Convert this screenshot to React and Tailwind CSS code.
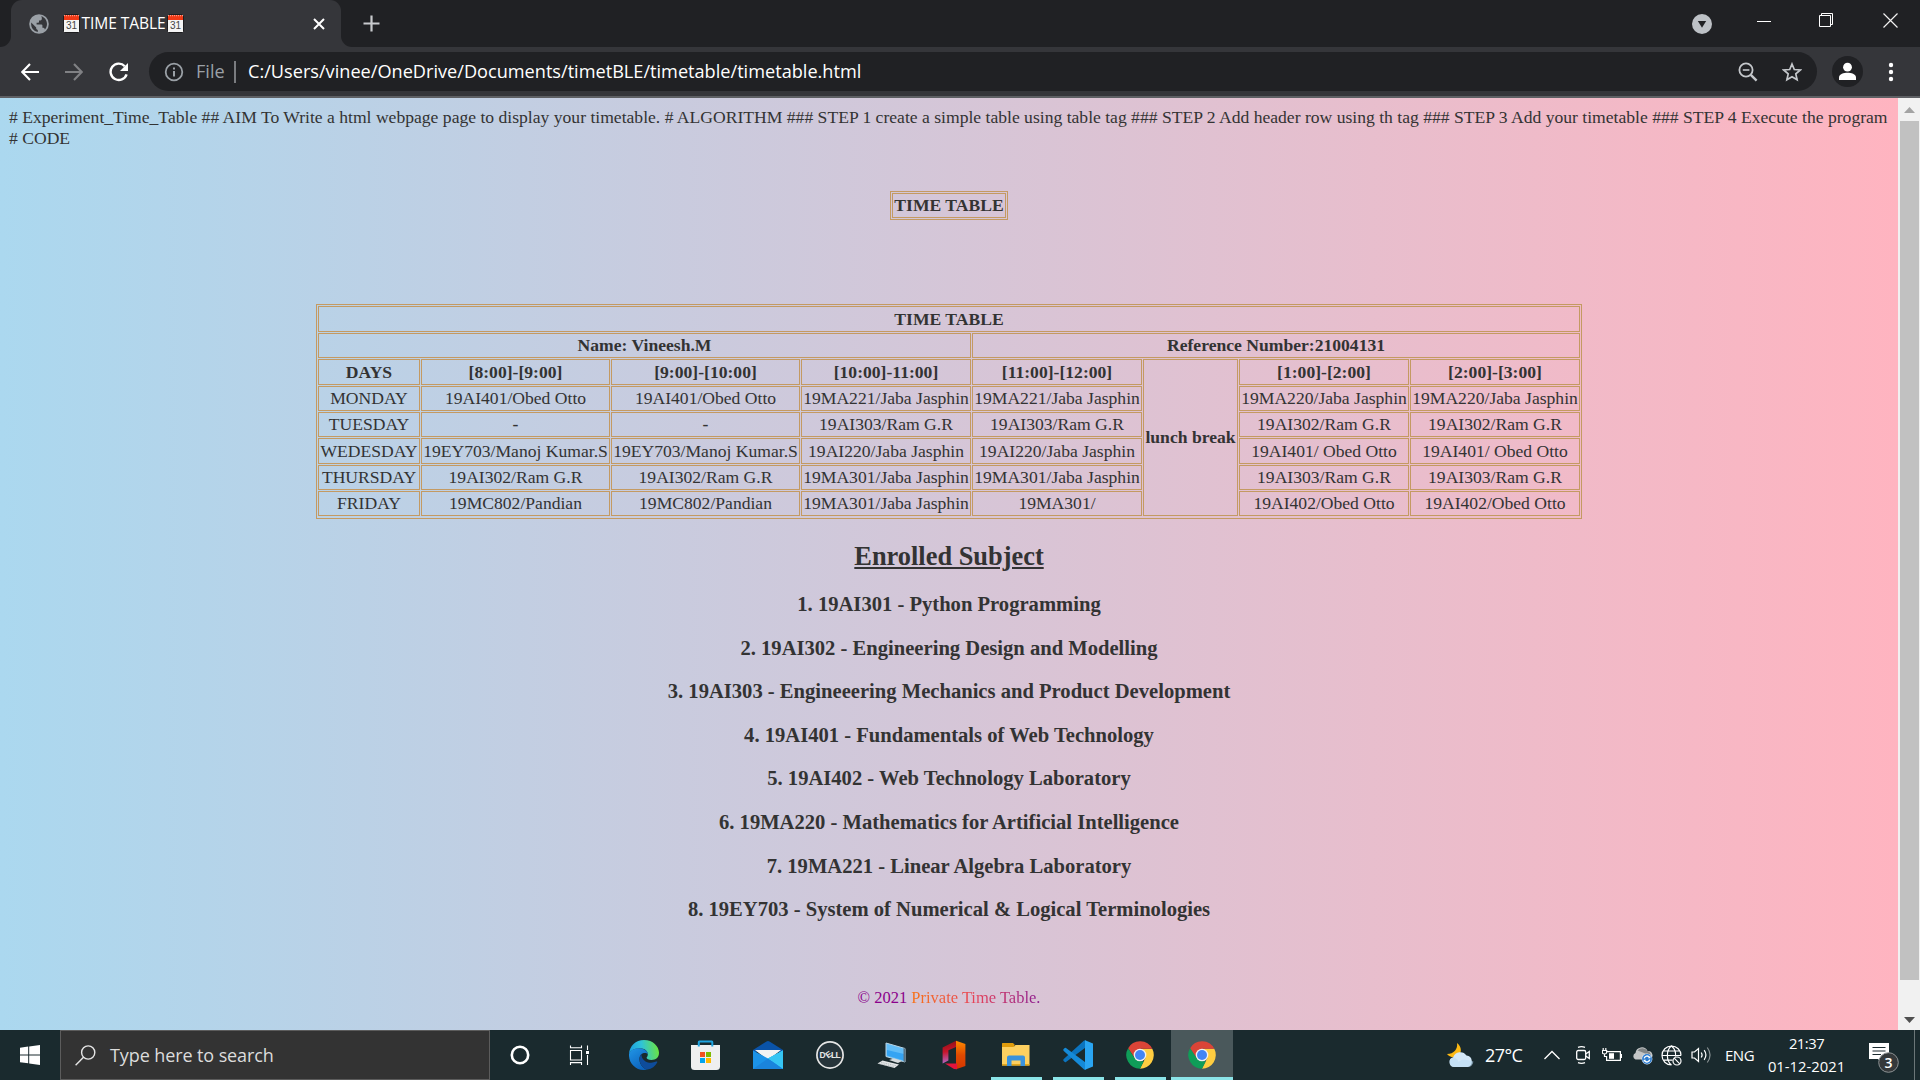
import React from "react";

const UI = "font-['Open_Sans','Noto_Sans',sans-serif]";

/* ---------- browser icons ---------- */

function Globe() {
  return (
    <svg width="20" height="20" viewBox="0 0 20 20">
      <circle cx="10" cy="10" r="9.8" fill="#9aa0a6" />
      <path
        d="M2.2 8.6 L7.2 13.4 V14.6 Q7.2 15.6 8.8 15.9 V18 C4.8 17.4 1.6 14 2.2 8.6Z M12.2 2.3 C15.2 3 18 6 18 10 C18 12.4 17 14.4 15.9 15.4 C15.5 14.2 14.8 13.8 13.4 13.8 V11.4 Q13.4 10.6 12.4 10.6 H7.6 V8.8 H9.2 Q10 8.8 10 8 V6.4 H11.4 Q12.8 6.4 12.8 5 V3.6Z"
        fill="#35363a"
      />
    </svg>
  );
}

function Calendar() {
  return (
    <svg width="17" height="19" viewBox="0 0 17 19" className="shrink-0">
      <rect x="0.5" y="0.5" width="16" height="18" rx="1" fill="#f4f4f4" stroke="#1d1d1f" />
      <rect x="1" y="1" width="15" height="5" fill="#f03a17" />
      <path d="M1 1.7H16" stroke="#ffb3a3" strokeDasharray="1 1" strokeWidth="1" />
      <text x="8.5" y="15" textAnchor="middle" fontSize="10" fontFamily="Liberation Sans, sans-serif" fill="#444">31</text>
    </svg>
  );
}

function TabBar() {
  return (
    <div className="flex h-[47px] bg-[#202124]">
      <div className="flex w-[11px] items-end bg-[#35363a]">
        <div className="h-[47px] w-[11px] rounded-br-[11px] bg-[#202124]" />
      </div>
      <div className="flex bg-[#202124]">
        <div className="flex h-[47px] w-[330px] items-center rounded-t-[11px] bg-[#35363a] pl-[18px]">
          <Globe />
          <div className="ml-[14px] flex w-[121px] items-center justify-between">
            <Calendar />
            <span className="text-[15.6px] leading-none tracking-[-0.1px] whitespace-nowrap text-white">TIME TABLE</span>
            <Calendar />
          </div>
          <svg width="12" height="12" viewBox="0 0 12 12" className="ml-[129px]">
            <path d="M1 1 11 11M11 1 1 11" stroke="#fff" strokeWidth="2" />
          </svg>
        </div>
      </div>
      <div className="w-[11px] bg-[#35363a]">
        <div className="h-[47px] w-[11px] rounded-bl-[11px] bg-[#202124]" />
      </div>
      <div className="flex flex-1 items-center">
        <svg width="17" height="17" viewBox="0 0 17 17" className="ml-[11px]">
          <path d="M8.5 0.5V16.5M0.5 8.5H16.5" stroke="#c8cacd" strokeWidth="2.2" />
        </svg>
        <svg width="20" height="20" viewBox="0 0 20 20" className="ml-auto">
          <circle cx="10" cy="10" r="10" fill="#bdc1c6" />
          <path d="M5.8 7H14.2L10 13.8Z" fill="#202124" />
        </svg>
        <svg width="14" height="15" viewBox="0 0 14 15" className="mb-[7px] ml-[45px]">
          <path d="M0 8.5H14" stroke="#fff" />
        </svg>
        <svg width="15" height="15" viewBox="0 0 15 15" className="mb-[7px] ml-[48px]">
          <path d="M0.5 2.5H11.5V13.5H0.5ZM2.5 2V0.5H13.5V11.5H12" fill="none" stroke="#fff" />
        </svg>
        <svg width="15" height="15" viewBox="0 0 15 15" className="mr-[22px] mb-[7px] ml-[49px]">
          <path d="M0.5 0.5 14.5 14.5M14.5 0.5 0.5 14.5" stroke="#f1f1f1" strokeWidth="1.2" />
        </svg>
      </div>
    </div>
  );
}

function Toolbar() {
  return (
    <div className="flex h-[51px] items-center border-b-2 border-[#5e6064] bg-[#35363a] text-white">
      <svg width="18" height="18" viewBox="0 0 18 18" className="ml-[21px]">
        <path d="M18 9H1.5M9 1 1.3 9 9 17" fill="none" stroke="#fff" strokeWidth="2.1" />
      </svg>
      <svg width="18" height="18" viewBox="0 0 18 18" className="ml-[26px]">
        <path d="M0 9H16.5M9 1 16.7 9 9 17" fill="none" stroke="#808184" strokeWidth="2.1" />
      </svg>
      <svg width="20" height="20" viewBox="0 0 20 20" className="ml-[26px]">
        <path d="M15.8 4.2A8.2 8.2 0 1 0 17.6 12.4" fill="none" stroke="#fff" strokeWidth="2.4" />
        <path d="M19 1V9H11Z" fill="#fff" />
      </svg>
      <div className="ml-[20px] flex h-[39px] w-[1668px] items-center rounded-full bg-[#202124]">
        <svg width="20" height="20" viewBox="0 0 20 20" className="ml-[15px]">
          <circle cx="10" cy="10" r="8.3" fill="none" stroke="#9aa0a6" strokeWidth="1.8" />
          <path d="M10 9V14.6M10 5.4V7.4" stroke="#9aa0a6" strokeWidth="2" />
        </svg>
        <span className="ml-[12px] w-[38px] text-[18.1px] leading-none whitespace-nowrap text-[#9aa0a6]">File</span>
        <div className="h-[22px] w-[2px] bg-[#7a7c80]" />
        <span className="ml-[12px] text-[18.15px] leading-none whitespace-nowrap">
          C:/Users/vinee/OneDrive/Documents/timetBLE/timetable/timetable.html
        </span>
        <svg width="20" height="20" viewBox="0 0 20 20" className="ml-auto" fill="none" stroke="#c4c7cb" strokeWidth="1.8">
          <circle cx="8" cy="8" r="6.6" />
          <path d="M12.8 12.8 18.6 18.6" strokeWidth="2.4" />
          <path d="M4.8 8H11.4" strokeWidth="1.6" />
        </svg>
        <svg width="20" height="20" viewBox="0 0 20 20" className="mr-[15px] ml-[24px]">
          <path d="M10 2 12.3 7.5 18.3 8 13.8 11.9 15.1 17.8 10 14.7 4.9 17.8 6.2 11.9 1.7 8 7.7 7.5Z" fill="none" stroke="#c4c7cb" strokeWidth="1.7" />
        </svg>
      </div>
      <svg width="31" height="31" viewBox="0 0 31 31" className="ml-[15px]">
        <circle cx="15.5" cy="15.5" r="15.5" fill="#202124" />
        <circle cx="15.5" cy="11.2" r="4.4" fill="#fff" />
        <path d="M7 24V21.5C7 18 12 16.8 15.5 16.8S24 18 24 21.5V24Z" fill="#fff" />
      </svg>
      <svg width="6" height="20" viewBox="0 0 6 20" className="ml-[25px]" fill="#fff">
        <circle cx="3" cy="3" r="2.2" />
        <circle cx="3" cy="10" r="2.2" />
        <circle cx="3" cy="17" r="2.2" />
      </svg>
    </div>
  );
}

/* ---------- page ---------- */

const DAYS = [
  ["MONDAY", "19AI401/Obed Otto", "19AI401/Obed Otto", "19MA221/Jaba Jasphin", "19MA221/Jaba Jasphin", "19MA220/Jaba Jasphin", "19MA220/Jaba Jasphin"],
  ["TUESDAY", "-", "-", "19AI303/Ram G.R", "19AI303/Ram G.R", "19AI302/Ram G.R", "19AI302/Ram G.R"],
  ["WEDESDAY", "19EY703/Manoj Kumar.S", "19EY703/Manoj Kumar.S", "19AI220/Jaba Jasphin", "19AI220/Jaba Jasphin", "19AI401/ Obed Otto", "19AI401/ Obed Otto"],
  ["THURSDAY", "19AI302/Ram G.R", "19AI302/Ram G.R", "19MA301/Jaba Jasphin", "19MA301/Jaba Jasphin", "19AI303/Ram G.R", "19AI303/Ram G.R"],
  ["FRIDAY", "19MC802/Pandian", "19MC802/Pandian", "19MA301/Jaba Jasphin", "19MA301/", "19AI402/Obed Otto", "19AI402/Obed Otto"],
];

const SUBJECTS = [
  "1. 19AI301 - Python Programming",
  "2. 19AI302 - Engineering Design and Modelling",
  "3. 19AI303 - Engineeering Mechanics and Product Development",
  "4. 19AI401 - Fundamentals of Web Technology",
  "5. 19AI402 - Web Technology Laboratory",
  "6. 19MA220 - Mathematics for Artificial Intelligence",
  "7. 19MA221 - Linear Algebra Laboratory",
  "8. 19EY703 - System of Numerical & Logical Terminologies",
];

function Cell({ children, className = "" }) {
  return (
    <div className={`flex items-center justify-center border border-[#c49a62] leading-[21px] whitespace-nowrap ${className}`}>
      {children}
    </div>
  );
}

function Timetable() {
  return (
    <div className="mx-auto mt-[84px] grid w-[1266px] grid-cols-[102px_189px_189px_170px_170px_95px_170px_170px] grid-rows-[26px_25px_26px_25px_25px_26px_25px_25px] gap-px border border-[#c49a62] px-px pt-px pb-[2px]">
      <Cell className="col-span-8 font-bold">TIME TABLE</Cell>
      <Cell className="col-span-4 font-bold">Name: Vineesh.M</Cell>
      <Cell className="col-span-4 font-bold">Reference Number:21004131</Cell>
      <Cell className="font-bold">DAYS</Cell>
      <Cell className="font-bold">[8:00]-[9:00]</Cell>
      <Cell className="font-bold">[9:00]-[10:00]</Cell>
      <Cell className="font-bold">[10:00]-11:00]</Cell>
      <Cell className="font-bold">[11:00]-[12:00]</Cell>
      <Cell className="row-span-6 font-bold">lunch break</Cell>
      <Cell className="font-bold">[1:00]-[2:00]</Cell>
      <Cell className="font-bold">[2:00]-[3:00]</Cell>
      {DAYS.map((row) =>
        row.map((text, i) => (
          <Cell key={row[0] + i} className={text === "-" ? "font-bold" : ""}>
            {text}
          </Cell>
        ))
      )}
    </div>
  );
}

function Page() {
  return (
    <div className="flex h-[932px]">
      <div className="flex w-[1898px] flex-col bg-linear-to-r/srgb from-[#abd8ef] to-[#ffb4c0] px-[9px] pt-[9px] font-['Liberation_Serif',serif] text-[17.6px] leading-[21px] text-[#333]">
        <div className="whitespace-nowrap">
          # Experiment_Time_Table ## AIM To Write a html webpage page to display your timetable. # ALGORITHM ### STEP 1 create a simple table using table tag ### STEP 2 Add header row using th tag ### STEP 3 Add your timetable ### STEP 4 Execute the program
          <br />
          # CODE
        </div>
        <div className="mx-auto mt-[42px] h-[29px] w-[118px] border border-[#c49a62] p-px">
          <Cell className="h-[25px] font-bold">TIME TABLE</Cell>
        </div>
        <Timetable />
        <h2 className="mt-[22px] text-center text-[26.4px] leading-[31px] font-bold underline">Enrolled Subject</h2>
        <div className="mt-[20px] flex flex-col gap-[19.6px] text-center text-[20.6px] leading-[24px] font-bold">
          {SUBJECTS.map((s) => (
            <h3 key={s}>{s}</h3>
          ))}
        </div>
        <footer className="mt-[67px] text-center text-[16.5px] leading-[20px] text-[#8b008b]">
          © 2021{" "}
          <span className="bg-linear-to-r/srgb from-[#f97316] via-[#e6435a] to-[#8b1a8f] bg-clip-text text-transparent">
            Private Time Table.
          </span>
        </footer>
      </div>
      <div className="flex w-[22px] flex-col items-center bg-[#f1f1f1]">
        <svg width="22" height="23" viewBox="0 0 22 23">
          <path d="M6 15H17L11.5 9Z" fill="#a3a3a3" />
        </svg>
        <div className="ml-px h-[859px] w-[19px] bg-[#c1c1c1]" />
        <svg width="22" height="50" viewBox="0 0 22 50">
          <path d="M6 37H17L11.5 43Z" fill="#505050" />
        </svg>
      </div>
    </div>
  );
}

/* ---------- taskbar icons ---------- */

function Edge() {
  return (
    <svg width="30" height="30" viewBox="0 0 30 30">
      <defs>
        <linearGradient id="edgeTop" x1="0" y1="0.6" x2="1" y2="0.5">
          <stop offset="0" stopColor="#1b9de2" />
          <stop offset="0.45" stopColor="#2fc3d8" />
          <stop offset="1" stopColor="#6be43f" />
        </linearGradient>
        <linearGradient id="edgeLow" x1="0" y1="0" x2="0.6" y2="1">
          <stop offset="0" stopColor="#2196e6" />
          <stop offset="1" stopColor="#0c63bd" />
        </linearGradient>
      </defs>
      <path d="M0 14C0.6 6 6.6 0 15 0 24 0 30 6.4 30 12.8 30 17.6 26.6 20 22.6 20 19.4 20 17.6 19 17.6 17.8 17.6 16.8 18.8 16.6 18.8 14.4 18.8 11 15.6 8.2 10.8 8.2 5 8.2 1 11 0 14Z" fill="url(#edgeTop)" />
      <path d="M0 14C1 10.5 5 8.2 10 8.2 14.6 8.2 18.6 10.6 18.8 14.2 17.4 12 10.6 12.2 10.4 19 10.2 25 15.6 29.6 18.6 29.5 7.8 32 -0.6 23.6 0 14Z" fill="url(#edgeLow)" />
      <path d="M12.4 13.4C8.6 18.8 11 27.6 18.4 29.6 22.8 28.8 26.4 26.2 28.2 22.4 28.5 21.6 28 21.2 27.2 21.6 20.2 24.8 12 21 12.4 13.4Z" fill="#0e4c9b" />
    </svg>
  );
}

function Store() {
  return (
    <svg width="30" height="30" viewBox="0 0 30 30">
      <path d="M7.8 5.5V2.2Q7.8 1.6 8.3 1.6H20.8Q21.3 1.6 21.3 2.2V5.5" fill="none" stroke="#1fa4e0" strokeWidth="2" />
      <path d="M0 5H29V26.5Q29 30 25.4 30H3.6Q0 30 0 26.5Z" fill="#efefef" />
      <path d="M9 12H14V17H9Z" fill="#f25022" />
      <path d="M15 12H20V17H15Z" fill="#7fba00" />
      <path d="M9 18H14V23H9Z" fill="#00a4ef" />
      <path d="M15 18H20V23H15Z" fill="#ffb900" />
      <path d="M7.8 5V6.6M21.3 5V6.6" stroke="#1fa4e0" strokeWidth="2" />
    </svg>
  );
}

function Mail() {
  return (
    <svg width="30" height="30" viewBox="0 0 30 30">
      <path d="M0 10 13.5 1.4Q15 0.5 16.5 1.4L30 10V12H0Z" fill="#0a53a8" />
      <path d="M2 10H28L15 20Z" fill="#f3f3f3" />
      <path d="M0 10.5 15 18.5 30 10.5V29H0Z" fill="#1c93e8" />
      <path d="M30 10.5V29L15 18.5Z" fill="#38c9f5" />
      <path d="M0 29 15 18.5 30 29Z" fill="#1a84dc" />
      <path d="M15 18.5 30 10.5V27Z" fill="#36c5f3" />
    </svg>
  );
}

function Dell() {
  return (
    <svg width="30" height="30" viewBox="0 0 30 30">
      <circle cx="15" cy="15" r="13.1" fill="#26343a" stroke="#e6e6e6" strokeWidth="1.7" />
      <g fontFamily="Liberation Sans, sans-serif" fontWeight="bold" fontSize="8.5" fill="#e6e6e6">
        <text x="4.4" y="18">D</text>
        <text x="11" y="17.6" transform="rotate(-35 13.5 15)">E</text>
        <text x="16" y="18">L</text>
        <text x="20.6" y="18">L</text>
      </g>
    </svg>
  );
}

function RemotePc() {
  return (
    <svg width="30" height="30" viewBox="0 0 30 30">
      <path d="M9 3 28 8.5V22L9 16.5Z" fill="#62bdf7" stroke="#b9d4e4" strokeWidth="1" />
      <path d="M10 10 27 14V20.5L10 15.5Z" fill="#35a4f3" />
      <path d="M28 8.5V22L26.5 21.6V8Z" fill="#5a7282" />
      <path d="M12 20 17 18.5 25 21 21 23Z" fill="#d7dbdd" />
      <path d="M0.5 23.5 5.5 20.5 22 24.5 17.5 28Z" fill="#e4e6e7" />
      <path d="M2 23.6 17.6 27.1M4 22.3 19.4 25.8" stroke="#9aa3a7" strokeWidth="0.6" strokeDasharray="1.5 0.8" />
    </svg>
  );
}

function Office() {
  return (
    <svg width="30" height="30" viewBox="0 0 30 30">
      <defs>
        <linearGradient id="offLeft" x1="0" y1="0" x2="0.1" y2="1">
          <stop offset="0" stopColor="#8a0f12" />
          <stop offset="0.5" stopColor="#c7152b" />
          <stop offset="1" stopColor="#b267c4" />
        </linearGradient>
        <linearGradient id="offRight" x1="0" y1="0" x2="0" y2="1">
          <stop offset="0" stopColor="#ff8a00" />
          <stop offset="0.5" stopColor="#e04a00" />
          <stop offset="1" stopColor="#d63600" />
        </linearGradient>
      </defs>
      <path d="M3.6 7.5 17 0.8V7L9.4 10.3V20.5L3.6 23.5Z" fill="url(#offLeft)" />
      <path d="M17 0.8 26.4 4V26L17 29.2Z" fill="url(#offRight)" />
      <path d="M6 23.5H18V29.2L15 29Z" fill="#e3143c" />
    </svg>
  );
}

function Explorer() {
  return (
    <svg width="30" height="30" viewBox="0 0 30 30">
      <path d="M1 3.2Q1 3 2 3H12L14.5 5.5H13V10H1Z" fill="#e09c0c" />
      <path d="M1 7H12.5L14.5 5H28.5V25.5H1Z" fill="#fdd060" />
      <path d="M1 24H28.5V25.5H1Z" fill="#e3a619" />
      <path d="M6 26V17.4Q6 15.4 8 15.4H22Q24 15.4 24 17.4V26H19.5V20.6H10.5V26Z" fill="#3992dd" />
    </svg>
  );
}

function VsCode() {
  return (
    <svg width="30" height="30" viewBox="0 0 30 30">
      <path d="M0.5 19.3Q0 20.3 0.6 20.9L1.8 22Q2.4 22.4 3 22L22.6 7.4V0.2Q21.6 0 20.8 0.8Z" fill="#0b74bf" />
      <path d="M0.5 10.7Q0 9.7 0.6 9.1L1.8 8Q2.4 7.6 3 8L22.6 22.6V29.8Q21.6 30 20.8 29.2Z" fill="#158ad8" />
      <path d="M22 0.2 30 3.6V26.4L22 29.8Z" fill="#2aa5f2" />
    </svg>
  );
}

function Chrome() {
  return (
    <svg width="28" height="28" viewBox="0 0 28 28">
      <path d="M14 7.8H26.3A13.7 13.7 0 0 1 14 27.7L19.4 17.1Z" fill="#ffcd40" />
      <path d="M14 7.8H26.3A13.7 13.7 0 0 0 2.12 7.14L8.6 17.1Z" fill="#db4437" />
      <path d="M2.12 7.14 8.6 17.1 14 20.2H17.8L14 27.7A13.7 13.7 0 0 1 2.12 7.14Z" fill="#0f9d58" />
      <circle cx="14" cy="14" r="6.3" fill="#f1f1f1" />
      <circle cx="14" cy="14" r="5" fill="#4285f4" />
    </svg>
  );
}

function TaskItem({ children, open = false, active = false }) {
  return (
    <div className={`flex h-[50px] w-[62px] flex-col items-center ${active ? "bg-[#4a585b]" : ""}`}>
      <div className="flex h-[47px] items-center pt-[3px]">{children}</div>
      {open && <div className={`h-[3px] bg-[#8be4e8] ${active ? "w-full" : "w-[51px]"}`} />}
    </div>
  );
}

function Tray() {
  return (
    <div className="flex h-[50px] flex-1 items-center text-white">
      <svg width="28" height="26" viewBox="0 0 28 26" className="ml-auto">
        <path d="M11 1C16 5 16 11 12 14 8 16.5 3 15 1 12 8 12 12 7 11 1Z" fill="#fdb913" />
        <path d="M8 25A5 5 0 0 1 7.2 15.2 7.5 7.5 0 0 1 20.5 13.6 5.9 5.9 0 0 1 22 25Z" fill="#d4e8f8" />
        <path d="M8 25A5 5 0 0 1 5 16.5C8 14.5 12 17 12.5 20 16 16 22 18 27.4 19.5 27 23 25 25 22 25Z" fill="#b9daf3" opacity=".6" />
      </svg>
      <span className="ml-[11px] w-[38px] text-[18px] leading-none tracking-[-0.6px] whitespace-nowrap">27°C</span>
      <svg width="16" height="10" viewBox="0 0 16 10" className="ml-[21px]">
        <path d="M0.5 9 8 1.5 15.5 9" fill="none" stroke="#fff" strokeWidth="1.3" />
      </svg>
      <svg width="14" height="18" viewBox="0 0 14 18" className="ml-[16px]" fill="none" stroke="#fff" strokeWidth="1.3">
        <rect x="0.7" y="4.5" width="9" height="9" rx="1.5" />
        <path d="M9.7 8 13.3 5.5V12.5L9.7 10M2 1.4Q5.5 0 9 1.4M2 16.6Q5.5 18 9 16.6" />
      </svg>
      <svg width="20" height="15" viewBox="0 0 20 15" className="ml-[12px]" fill="none" stroke="#fff" strokeWidth="1.2">
        <path d="M5 3.6H18.4V12.4H4.6V8M18.4 6.5H19.6V9.5H18.4" />
        <path d="M1.2 0V2.5M3.8 0V2.5M0.4 2.5H4.6V4.5Q4.6 6 2.5 6T0.4 4.5ZM2.5 6V8.5H4.6" />
        <path d="M7 5.2H12V10.8H7Z" fill="#fff" stroke="none" />
      </svg>
      <svg width="21" height="20" viewBox="0 0 21 20" className="ml-[10px]">
        <path d="M3.5 14.5A3.5 3.5 0 0 1 3.5 8 6.3 6.3 0 0 1 15.5 6 4.5 4.5 0 0 1 18 14.5Z" fill="#c4c6c7" />
        <path d="M5.5 5.6A6.3 6.3 0 0 1 15.5 6C18 6.5 19 9 18.5 10.5Z" fill="#818586" />
        <circle cx="15" cy="14" r="5.4" fill="#e8f1fa" />
        <circle cx="15" cy="14" r="4.9" fill="#2a7bd0" />
        <path d="M12.2 13.3A2.9 2.9 0 0 1 17.4 12.3M17.8 14.7A2.9 2.9 0 0 1 12.6 15.7" fill="none" stroke="#fff" strokeWidth="1.4" />
        <path d="M18.4 10.8V13.3H15.9ZM11.6 17.2V14.7H14.1Z" fill="#fff" />
      </svg>
      <svg width="21" height="21" viewBox="0 0 21 21" className="ml-[8px]" fill="none" stroke="#fff" strokeWidth="1.2">
        <path d="M10.5 20A9.5 9.5 0 1 1 20 10.5M10.5 1C5 5 5 16 10.5 20M10.5 1C14 4 15 8 14.4 11.5M2.4 6H18.6M1 10.5H20M2.4 15.2H11.5" />
        <circle cx="16" cy="16" r="4" />
        <path d="M13.2 13.2 18.8 18.8" />
      </svg>
      <svg width="21" height="18" viewBox="0 0 21 18" className="ml-[9px]" fill="none" stroke="#fff" strokeWidth="1.2">
        <path d="M1 6H3.5L7.5 2.5V15.5L3.5 12H1Z" />
        <path d="M10.2 6.5Q12 9 10.2 11.5M13.2 4.2Q16.6 9 13.2 13.8" />
        <path d="M16.3 1.5Q21.8 9 16.3 16.5" stroke="#8a9395" />
      </svg>
      <span className="ml-[13px] w-[28px] text-[15px] leading-none tracking-[-0.5px] whitespace-nowrap">ENG</span>
      <div className="ml-[15px] flex w-[77px] flex-col items-center text-[14.8px] leading-[23px] whitespace-nowrap">
        <span className="tracking-[-0.5px]">21:37</span>
        <span>01-12-2021</span>
      </div>
      <svg width="32" height="32" viewBox="0 0 32 32" className="mt-[4px] ml-[23px]">
        <path d="M1 2H21V18H14V22L10 18H1Z" fill="#fff" />
        <path d="M4.5 6.5H17.5M4.5 10H17.5M4.5 13.5H13" stroke="#1c2b30" strokeWidth="1.1" />
        <circle cx="20.5" cy="21.5" r="9.8" fill="#35393b" stroke="#8d9294" strokeWidth="1" />
        <text x="20.5" y="26.6" textAnchor="middle" fontSize="14" fontWeight="600" fontFamily="Open Sans, sans-serif" fill="#fff">3</text>
      </svg>
      <div className="mr-[5px] ml-[14px] h-[50px] w-px bg-[#6b7678]" />
    </div>
  );
}

function Taskbar() {
  return (
    <div className="flex h-[50px] bg-[#1a2a2e]">
      <div className="flex w-[60px] items-center justify-center">
        <svg width="20" height="20" viewBox="0 0 20 20" fill="#fff">
          <path d="M0 2.7 8.2 1.6V9.4H0ZM9.2 1.4 20 0V9.4H9.2ZM0 10.4H8.2V18.3L0 17.2ZM9.2 10.4H20V20L9.2 18.5Z" />
        </svg>
      </div>
      <div className="flex w-[430px] items-center border border-[#5c5c5c] bg-[#333]">
        <svg width="21" height="21" viewBox="0 0 21 21" className="ml-[14px]" fill="none" stroke="#e6e6e6" strokeWidth="1.4">
          <circle cx="13.2" cy="7.5" r="6.6" />
          <path d="M8.5 12.2 0.6 20.2" />
        </svg>
        <span className="ml-[14px] text-[18px] leading-none tracking-[-0.1px] whitespace-nowrap text-[#dcdcdc]">Type here to search</span>
      </div>
      <div className="flex w-[60px] items-center justify-center">
        <svg width="20" height="20" viewBox="0 0 20 20">
          <circle cx="10" cy="10" r="8.2" fill="none" stroke="#fff" strokeWidth="2.6" />
        </svg>
      </div>
      <div className="flex w-[62px] items-center pl-[19px]">
        <svg width="21" height="20" viewBox="0 0 21 20" fill="none" stroke="#fff" strokeWidth="1.1">
          <path d="M1.5 5.5H12.5V15H1.5ZM1.5 0.5V2.8H12.5V0.5M1.5 20V17.6H12.5V20M18.5 0.5V5M18.5 10V20" />
          <path d="M17 6H20V9H17Z" fill="#fff" stroke="none" />
        </svg>
      </div>
      <div className="flex pl-px">
        <TaskItem><Edge /></TaskItem>
        <TaskItem><Store /></TaskItem>
        <TaskItem><Mail /></TaskItem>
        <TaskItem><Dell /></TaskItem>
        <TaskItem><RemotePc /></TaskItem>
        <TaskItem><Office /></TaskItem>
        <TaskItem open><Explorer /></TaskItem>
        <TaskItem open><VsCode /></TaskItem>
        <TaskItem open><Chrome /></TaskItem>
        <TaskItem open active><Chrome /></TaskItem>
      </div>
      <Tray />
    </div>
  );
}

export default function App() {
  return (
    <div className={`h-[1080px] w-[1920px] overflow-hidden ${UI}`}>
      <TabBar />
      <Toolbar />
      <Page />
      <Taskbar />
    </div>
  );
}
